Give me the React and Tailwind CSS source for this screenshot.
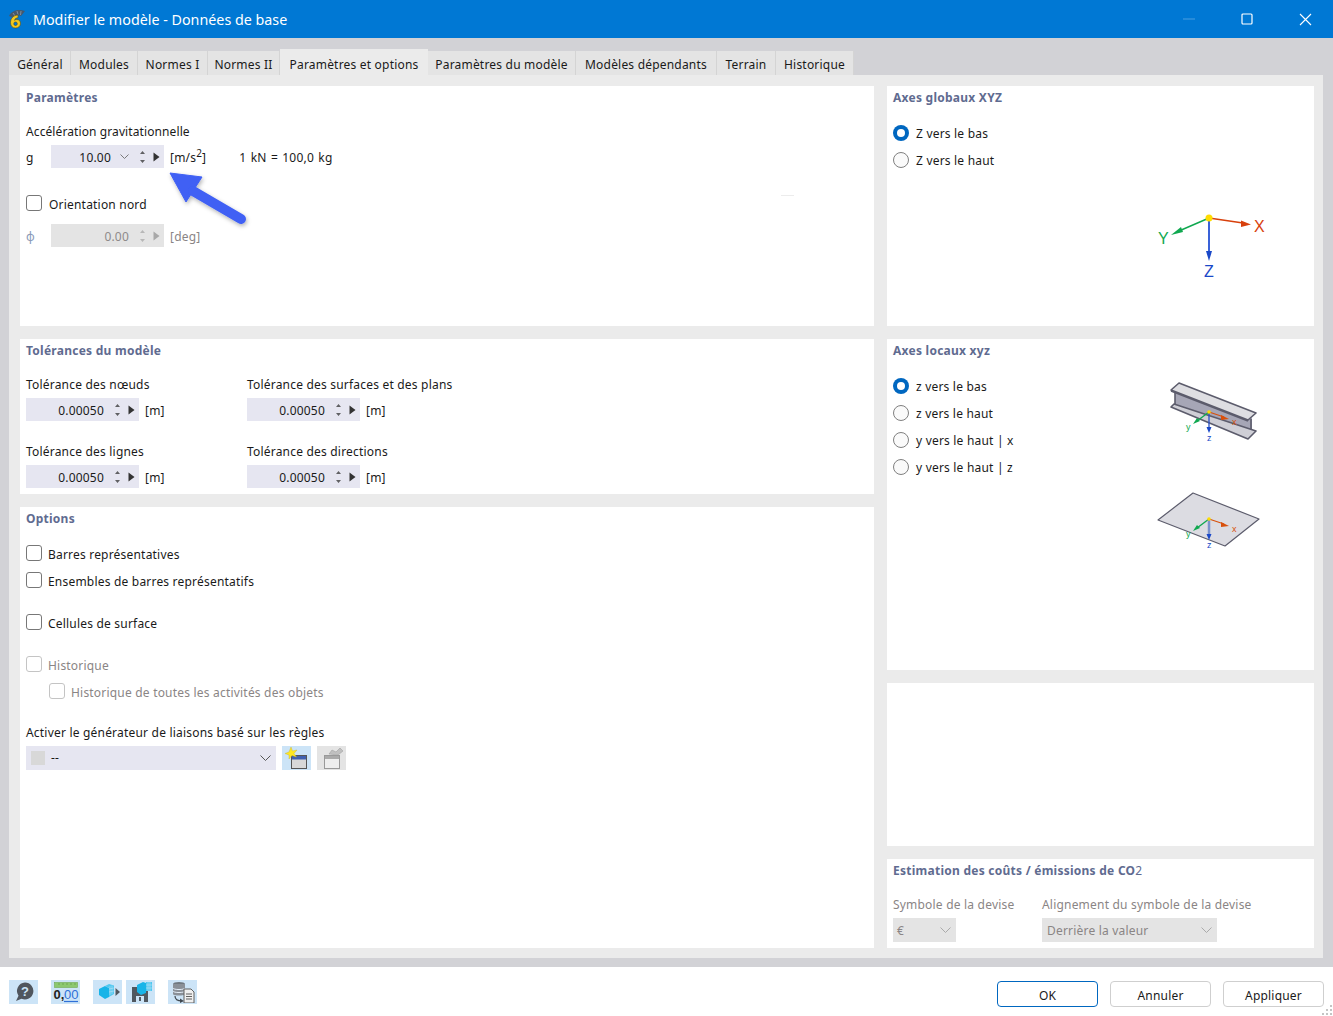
import React from "react";

const Tab = ({ w, children, active }) => (
  <div className={active
    ? `${w} h-[26px] bg-[#ebebeb] flex items-center justify-center text-[#1a1a1a] pt-[5px]`
    : `${w} h-[24px] bg-[#e4e4e4] flex items-center justify-center text-[#1a1a1a] border-r border-[#d4d4d4] pt-[3px]`}>
    {children}
  </div>
);

const Title = ({ children }) => <div className="h-[22px] leading-[24px] font-bold text-[#5f6b90] tracking-[0.25px]">{children}</div>;

const Spin = ({ value, chevron, disabled }) => {
  const c = disabled ? "#a8a8a8" : "#333333";
  return (
    <div className={`w-[113px] h-[23px] flex items-center ${disabled ? "bg-[#e4e4e4] text-[#8e8a8a]" : "bg-[#e6e6f1] text-[#1a1a1a]"}`}>
      <div className={`pt-[3px] text-right ${chevron ? "w-[60px]" : "w-[78px]"}`}>{value}</div>
      {chevron && (
        <svg width="9" height="5" viewBox="0 0 9 5" className="ml-[9px] mr-[10px]"><path d="M0.5 0.5 L4.5 4.500 L8.500 0.5" fill="none" stroke="#7a7a7a" /></svg>
      )}
      <svg width="7" height="14" viewBox="0 0 7 14" className={chevron ? "" : "ml-[10px]"}>
        <path d="M3.5 1 L6 4 L1 4Z M3.5 13 L6 10 L1 10Z" fill={c} opacity="0.75" />
      </svg>
      <svg width="7" height="10" viewBox="0 0 7 10" className="ml-[7px]"><path d="M0.5 0.5 L6.5 5 L0.5 9.5Z" fill={c} /></svg>
    </div>
  );
};

const Check = ({ label, disabled, className = "" }) => (
  <div className={`flex items-center h-[16px] ${className}`}>
    <div className={`w-[16px] h-[16px] rounded-[3px] border bg-white ${disabled ? "border-[#c4c4c4]" : "border-[#777777]"}`} />
    <span className={`ml-[6px] pt-[4px] ${disabled ? "text-[#8a8585]" : ""}`}>{label}</span>
  </div>
);

const Radio = ({ label, on }) => (
  <div className="flex items-center h-[27px]">
    {on
      ? <div className="w-[16px] h-[16px] rounded-full bg-[#0067c0] flex items-center justify-center"><div className="w-[8px] h-[8px] rounded-full bg-white" /></div>
      : <div className="w-[16px] h-[16px] rounded-full border border-[#808080] bg-[#fafafa]" />}
    <span className="ml-[7px] pt-[2px]">{label}</span>
  </div>
);

const TolField = ({ label }) => (
  <div className="w-[221px]">
    <div className="h-[22px] leading-[22px]">{label}</div>
    <div className="flex items-center mt-[2px]">
      <Spin value="0.00050" />
      <span className="ml-[6px] pt-[3px]">[m]</span>
    </div>
  </div>
);

const Axes = () => (
  <svg width="120" height="75" viewBox="0 0 120 75">
    <path d="M60 8 L30 21" stroke="#10a850" strokeWidth="1.5" />
    <path d="M22 25 L32 17 L34 22Z" fill="#10a850" />
    <path d="M60 8 L94 13" stroke="#d8400c" strokeWidth="1.5" />
    <path d="M102 14.500 L92 10.500 L92 17Z" fill="#d8400c" />
    <path d="M60 8 L60 42" stroke="#3a62d8" strokeWidth="2" />
    <path d="M60 51 L57 41 L63 41Z" fill="#1a48c8" />
    <circle cx="60" cy="8" r="3.5" fill="#ffdc00" />
    <text x="9" y="34" fontSize="16" fill="#10a850" fontFamily="Liberation Sans, sans-serif">Y</text>
    <text x="105" y="22" fontSize="16" fill="#d8400c" fontFamily="Liberation Sans, sans-serif">X</text>
    <text x="55" y="67" fontSize="16" fill="#1a48c8" fontFamily="Liberation Sans, sans-serif">Z</text>
  </svg>
);

const Small = ({ ox, oy, w }) => (
  <g>
    <path d={`M${ox} ${oy} L${ox - 12} ${oy + 9}`} stroke="#10a850" strokeWidth="1.3" />
    <path d={`M${ox - 16} ${oy + 12} L${ox - 12} ${oy + 6} L${ox - 9} ${oy + 9}Z`} fill="#10a850" />
    <path d={`M${ox} ${oy} L${ox + 15} ${oy + 5}`} stroke="#d8500c" strokeWidth="1.3" />
    <path d={`M${ox + 20} ${oy + 7} L${ox + 12} ${oy + 3} L${ox + 12} ${oy + 8}Z`} fill="#d8500c" />
    <path d={`M${ox} ${oy} L${ox} ${oy + 16}`} stroke={w ? "#7b92cc" : "#2a50c0"} strokeWidth={w ? 2.5 : 1.3} />
    <path d={`M${ox} ${oy + 21} L${ox - 2.5} ${oy + 15} L${ox + 2.5} ${oy + 15}Z`} fill="#1a48c8" />
    <circle cx={ox} cy={oy} r="1.8" fill="#ffdc00" />
    <text x={ox - 23} y={oy + 18} fontSize="9" fill="#10a850" fontFamily="Liberation Sans, sans-serif">y</text>
    <text x={ox + 23} y={oy + 13} fontSize="9" fill="#d8500c" fontFamily="Liberation Sans, sans-serif">x</text>
    <text x={ox - 2} y={oy + 29} fontSize="9" fill="#1a48c8" fontFamily="Liberation Sans, sans-serif">z</text>
  </g>
);

const Beam = () => (
  <svg width="90" height="60" viewBox="0 0 90 60">
    <path d="M5 9 L82 36 L82 50 L5 23Z" fill="#a6a6b6" />
    <path d="M5 9 V24 M81 37 V51" stroke="#5c5c6c" strokeWidth="1.6" />
    <path d="M1 25 L4 22 L86 49 L78 57Z" fill="#cfcfd6" stroke="#5c5c6c" strokeWidth="1.6" strokeLinejoin="round" />
    <path d="M1 8 L9 1 L86 31 L78 38Z" fill="#dedee2" stroke="#5c5c6c" strokeWidth="1.6" strokeLinejoin="round" />
    <path d="M1 9 L78 39" stroke="#5c5c6c" strokeWidth="1.6" />
    <Small ox={39} oy={30} />
  </svg>
);

const Plate = () => (
  <svg width="104" height="60" viewBox="0 0 104 60">
    <path d="M1 28 L36 1 L102 27 L68 54Z" fill="#dcdce2" stroke="#5c5c6c" strokeWidth="1.2" strokeLinejoin="round" />
    <Small ox={52} oy={27} w />
  </svg>
);

const Ico = ({ children, off }) => (
  <div className={`w-[29px] h-[24px] flex items-center justify-center shrink-0 ${off ? "bg-[#e4e4e4]" : "bg-[#cce4f7]"}`}>{children}</div>
);

const Btn = ({ children, primary }) => (
  <button className={`w-[101px] h-[26px] rounded-[4px] bg-white text-[#1a1a1a] pt-[3px] ${primary ? "border border-[#0067c0]" : "border border-[#cfcfcf]"}`}>{children}</button>
);

const Chevron = ({ color = "#555555" }) => (
  <svg width="11" height="6" viewBox="0 0 11 6"><path d="M0.5 0.5 L5.5 5.5 L10.5 0.5" fill="none" stroke={color} /></svg>
);

export default function App() {
  return (
    <div className="w-[1333px] h-[1016px] overflow-hidden relative flex flex-col bg-white text-[12px] tracking-[0.2px] text-[#1a1a1a]" style={{ fontFamily: '"Noto Sans", sans-serif' }}>
      {/* title bar */}
      <div className="h-[38px] bg-[#0078d4] flex items-center text-white shrink-0">
        <svg width="20" height="20" viewBox="0 0 20 20" className="ml-[6px]">
          <path d="M3 7 C6 1 13 0 19 2 L15 7 C12 5.500 10 6 8 9Z" fill="#46586c" />
          <path d="M7 4 L9 7 M11 2 L12 5.500 M15 2 L14.500 6" stroke="#9aa8b8" strokeWidth="0.7" />
          <path d="M12 6 C8 6 4.500 9 4.500 13.500 C4.500 17 6.500 19 9.500 19 C12.500 19 14.500 17 14.500 14.500 C14.500 12 13 10.500 10.800 10.500 C10 10.500 9 10.800 8.500 11.300 C9 9.500 10.500 8.800 12 8.800Z M9.500 13 C10.500 13 11.300 13.600 11.300 14.700 C11.300 15.800 10.500 16.500 9.500 16.500 C8.500 16.500 7.800 15.800 7.800 14.700 C7.800 13.600 8.500 13 9.500 13Z" fill="#f2c81e" stroke="#5a4c10" strokeWidth="0.6" />
        </svg>
        <span className="ml-[7px] pt-[2px] text-[14.3px] tracking-normal">Modifier le modèle - Données de base</span>
        <div className="ml-auto flex items-center">
          <svg width="12" height="2" viewBox="0 0 12 2"><path d="M0 1 H12" stroke="#4a9ee0" /></svg>
          <svg width="12" height="12" viewBox="0 0 12 12" className="ml-[46px]"><rect x="1" y="1" width="10" height="10" rx="1" fill="none" stroke="white" strokeWidth="1.2" /></svg>
          <svg width="13" height="13" viewBox="0 0 13 13" className="ml-[46px] mr-[21px]"><path d="M1 1 L12 12 M12 1 L1 12" stroke="white" strokeWidth="1.1" /></svg>
        </div>
      </div>

      {/* body */}
      <div className="h-[929px] bg-[#d2d2d6] shrink-0 px-[9px] pr-[10px] flex flex-col">
        <div className="flex items-end h-[37px] shrink-0">
          <Tab w="w-[62px]"><span className="pl-[1px]">Général</span></Tab>
          <Tab w="w-[67px]">Modules</Tab>
          <Tab w="w-[70px]">Normes I</Tab>
          <Tab w="w-[72px]">Normes II</Tab>
          <Tab w="w-[148px]" active>Paramètres et options</Tab>
          <Tab w="w-[148px]">Paramètres du modèle</Tab>
          <Tab w="w-[141px]">Modèles dépendants</Tab>
          <Tab w="w-[59px]">Terrain</Tab>
          <Tab w="w-[78px]">Historique</Tab>
        </div>
        <div className="h-[883px] bg-[#ebebeb] shrink-0 pt-[11px] pl-[11px] pr-[9px] flex gap-[13px]">
          {/* left column */}
          <div className="w-[854px] flex flex-col gap-[13px]">
            <div className="h-[240px] bg-white px-[6px] relative">
              <Title>Paramètres</Title>
              <div className="h-[22px] leading-[24px] mt-[12px] tracking-[0.1px]">Accélération gravitationnelle</div>
              <div className="flex items-center mt-[3px]">
                <span className="w-[25px] pt-[3px]">g</span>
                <Spin value="10.00" chevron />
                <span className="ml-[6px] pt-[3px]">[m/s<sup className="text-[10px]">2</sup>]</span>
                <span className="ml-[33px] pt-[3px] [word-spacing:1px]">1 kN = 100,0 kg</span>
              </div>
              <div className="flex items-center h-[16px] mt-[27px]">
                <div className="w-[16px] h-[16px] rounded-[3px] border bg-white border-[#777777]" />
                <span className="ml-[7px] pt-[4px]">Orientation nord</span>
              </div>
              <div className="flex items-center mt-[13px]">
                <span className="w-[25px] pt-[2px] text-[#8a9ab8]">ϕ</span>
                <Spin value="0.00" disabled />
                <span className="ml-[6px] pt-[3px] text-[#8a8585]">[deg]</span>
              </div>
              <div className="absolute left-[761px] top-[109px] w-[13px] h-[1px] bg-[#ececec]" />
            </div>
            <div className="h-[155px] bg-white px-[6px]">
              <Title>Tolérances du modèle</Title>
              <div className="flex mt-[13px]">
                <TolField label="Tolérance des nœuds" />
                <TolField label="Tolérance des surfaces et des plans" />
              </div>
              <div className="flex mt-[20px]">
                <TolField label="Tolérance des lignes" />
                <TolField label="Tolérance des directions" />
              </div>
            </div>
            <div className="h-[441px] bg-white px-[6px]">
              <Title>Options</Title>
              <Check label="Barres représentatives" className="mt-[16px]" />
              <Check label="Ensembles de barres représentatifs" className="mt-[11px]" />
              <Check label="Cellules de surface" className="mt-[26px]" />
              <Check label="Historique" disabled className="mt-[26px]" />
              <Check label="Historique de toutes les activités des objets" disabled className="mt-[11px] ml-[23px]" />
              <div className="h-[22px] leading-[22px] mt-[23px]">Activer le générateur de liaisons basé sur les règles</div>
              <div className="flex items-center gap-[6px] mt-[2px]">
                <div className="w-[250px] h-[24px] bg-[#e6e6f1] flex items-center px-[5px]">
                  <div className="w-[14px] h-[14px] bg-[#d8d8d8]" />
                  <span className="ml-[6px]">--</span>
                  <div className="ml-auto flex"><Chevron /></div>
                </div>
                <div className="flex gap-[6px]">
                  <Ico>
                    <svg width="26" height="22" viewBox="0 0 26 22">
                      <rect x="7.500" y="8.500" width="15" height="13" fill="#d8d8d8" stroke="#555555" />
                      <rect x="8" y="9" width="14" height="3.500" fill="#4060b0" />
                      <path d="M7 0 L8.500 4 L13 3 L10 6.500 L12.500 10 L8 8.500 L5 12 L5 8 L1 6.500 L5 5Z" fill="#ffe820" stroke="#c8b030" strokeWidth="0.4" />
                    </svg>
                  </Ico>
                  <Ico off>
                    <svg width="26" height="22" viewBox="0 0 26 22">
                      <rect x="5.500" y="8.500" width="15" height="13" fill="#eeeeee" stroke="#999999" />
                      <rect x="6" y="9" width="14" height="3" fill="#aaaaaa" />
                      <path d="M10 7 L13 3 L17 5 L21 1 L24 4 L19 8Z" fill="#c0c0c0" stroke="#999999" strokeWidth="0.5" />
                    </svg>
                  </Ico>
                </div>
              </div>
            </div>
          </div>

          {/* right column */}
          <div className="w-[427px] flex flex-col gap-[13px]">
            <div className="h-[240px] bg-white px-[6px] flex justify-between">
              <div>
                <Title>Axes globaux XYZ</Title>
                <div className="mt-[11px]">
                  <Radio label="Z vers le bas" on />
                  <Radio label="Z vers le haut" />
                </div>
              </div>
              <div className="mt-[124px] mr-[39px] h-fit"><Axes /></div>
            </div>
            <div className="h-[331px] bg-white px-[6px] flex justify-between">
              <div>
                <Title>Axes locaux xyz</Title>
                <div className="mt-[11px]">
                  <Radio label="z vers le bas" on />
                  <Radio label="z vers le haut" />
                  <Radio label="y vers le haut | x" />
                  <Radio label="y vers le haut | z" />
                </div>
              </div>
              <div className="flex flex-col items-start mr-[47px] mt-[43px] h-fit">
                <div className="ml-[13px] h-[60px]"><Beam /></div>
                <div className="mt-[50px] h-[60px]"><Plate /></div>
              </div>
            </div>
            <div className="h-[163px] bg-white" />
            <div className="h-[89px] bg-white px-[6px]">
              <Title>Estimation des coûts / émissions de CO<span className="font-normal">2</span></Title>
              <div className="flex mt-[13px] text-[#8a8585]">
                <div className="w-[149px]">
                  <div className="h-[22px] leading-[22px]">Symbole de la devise</div>
                  <div className="w-[63px] h-[24px] mt-[2px] bg-[#e4e4e4] flex items-center justify-between px-[4px] pr-[5px]"><span className="pt-[1px]">€</span><Chevron color="#aaaaaa" /></div>
                </div>
                <div>
                  <div className="h-[22px] leading-[22px]">Alignement du symbole de la devise</div>
                  <div className="w-[175px] h-[24px] mt-[2px] bg-[#e4e4e4] flex items-center justify-between px-[5px]"><span className="pt-[1px]">Derrière la valeur</span><Chevron color="#aaaaaa" /></div>
                </div>
              </div>
            </div>
          </div>
        </div>
      </div>

      {/* footer */}
      <div className="flex-1 flex items-start relative px-[9px]">
        <div className="flex mt-[13px]">
          <Ico>
            <svg width="22" height="22" viewBox="0 0 22 22">
              <path d="M12 1.500 A8.500 8.500 0 1 1 8.500 17.800 L3 20 L5.500 14.800 A8.500 8.500 0 0 1 12 1.500Z" fill="#50565e" />
              <text x="12" y="14.500" fontSize="13" fontWeight="bold" fill="#cce4f7" textAnchor="middle" fontFamily="Liberation Sans, sans-serif">?</text>
            </svg>
          </Ico>
          <div className="ml-[13px]"><Ico>
            <svg width="26" height="22" viewBox="0 0 26 22">
              <rect x="1.500" y="1.500" width="23" height="5" fill="#8cc870" stroke="#70a850" strokeWidth="0.6" />
              <path d="M6 2 V4 M10 2 V4 M14 2 V4 M18 2 V4 M22 2 V4" stroke="#5c9440" strokeWidth="0.6" />
              <text x="0.500" y="18" fontSize="13" fontWeight="bold" fill="#222222" fontFamily="Liberation Sans, sans-serif" letterSpacing="0">0,</text>
              <text x="11" y="18" fontSize="13" fill="#2e70d8" fontFamily="Liberation Sans, sans-serif" letterSpacing="0">00</text>
              <path d="M11 20.500 H25" stroke="#2e70d8" strokeWidth="1.2" />
            </svg>
          </Ico></div>
          <div className="ml-[13px]"><Ico>
            <svg width="26" height="20" viewBox="0 0 26 20">
              <path d="M4 7 L10 4 L14 6 L14 15 L10 17 L4 13Z" fill="#18b4e8" />
              <path d="M10 4 L14 2 L19 3.500 L19 12 L14 15 L14 6Z" fill="#50c8f0" />
              <path d="M15 4 V13 M17 3.500 V12 M14 7 L19 6 M14 10 L19 9" stroke="#cce4f7" strokeWidth="0.5" />
              <path d="M20.500 6 L25 10 L20.500 14Z" fill="#505860" />
            </svg>
          </Ico></div>
          <div className="ml-[4px]"><Ico>
            <svg width="26" height="24" viewBox="0 0 26 24">
              <path d="M4 7 H18 L20 9 V22 H4Z" fill="#505860" />
              <rect x="8" y="16" width="8" height="6" fill="#cce4f7" />
              <rect x="11" y="17" width="2" height="4" fill="#505860" />
              <path d="M9 5 L15 2 L18 3 V13 L13 15 L9 12Z" fill="#18b4e8" />
              <path d="M18 2 H24 V11 H18Z" fill="#50c8f0" />
              <path d="M20 2 V11 M22 2 V11 M18 5 H24 M18 8 H24" stroke="#cce4f7" strokeWidth="0.5" />
            </svg>
          </Ico></div>
          <div className="ml-[13px]"><Ico>
            <svg width="26" height="22" viewBox="0 0 26 22">
              <ellipse cx="9" cy="3" rx="6" ry="2" fill="#707880" />
              <path d="M3 3 V13 C3 15 15 15 15 13 V3Z" fill="#8a9098" />
              <path d="M3 7 C3 9 15 9 15 7 M3 10 C3 12 15 12 15 10" stroke="#e4eef8" fill="none" />
              <path d="M5 15 C5 19 8 20 12 20" stroke="#404850" fill="none" strokeWidth="1.2" />
              <path d="M14 20 L10 17.500 L10 22Z" fill="#404850" />
              <path d="M14 8 H21 L24 11 V22 H14Z" fill="#f0f0f0" stroke="#606060" />
              <path d="M16 13 H22 M16 15.500 H22 M16 18 H22" stroke="#606060" />
            </svg>
          </Ico></div>
        </div>
        <div className="ml-auto flex gap-[12px] mt-[14px]">
          <Btn primary>OK</Btn>
          <Btn>Annuler</Btn>
          <Btn>Appliquer</Btn>
        </div>
        <svg width="12" height="12" viewBox="0 0 12 12" className="absolute right-0 bottom-0">
          <path d="M9 1h2v2H9zM5 5h2v2H5zM9 5h2v2H9zM1 9h2v2H1zM5 9h2v2H5zM9 9h2v2H9z" fill="#c4c4c4" />
        </svg>
      </div>

      {/* annotation arrow */}
      <svg width="100" height="80" viewBox="0 0 100 80" className="absolute left-[160px] top-[165px]">
        <defs>
          <filter id="sh" x="-20%" y="-20%" width="150%" height="150%">
            <feDropShadow dx="1" dy="2" stdDeviation="2" floodColor="#000000" floodOpacity="0.3" />
          </filter>
        </defs>
        <g filter="url(#sh)">
          <path d="M10 8 L42 12 L26 37Z" fill="#3f60f4" stroke="#3f60f4" strokeLinejoin="round" />
          <path d="M33 26 L81 54" stroke="#3f60f4" strokeWidth="10" strokeLinecap="round" />
        </g>
      </svg>
    </div>
  );
}
